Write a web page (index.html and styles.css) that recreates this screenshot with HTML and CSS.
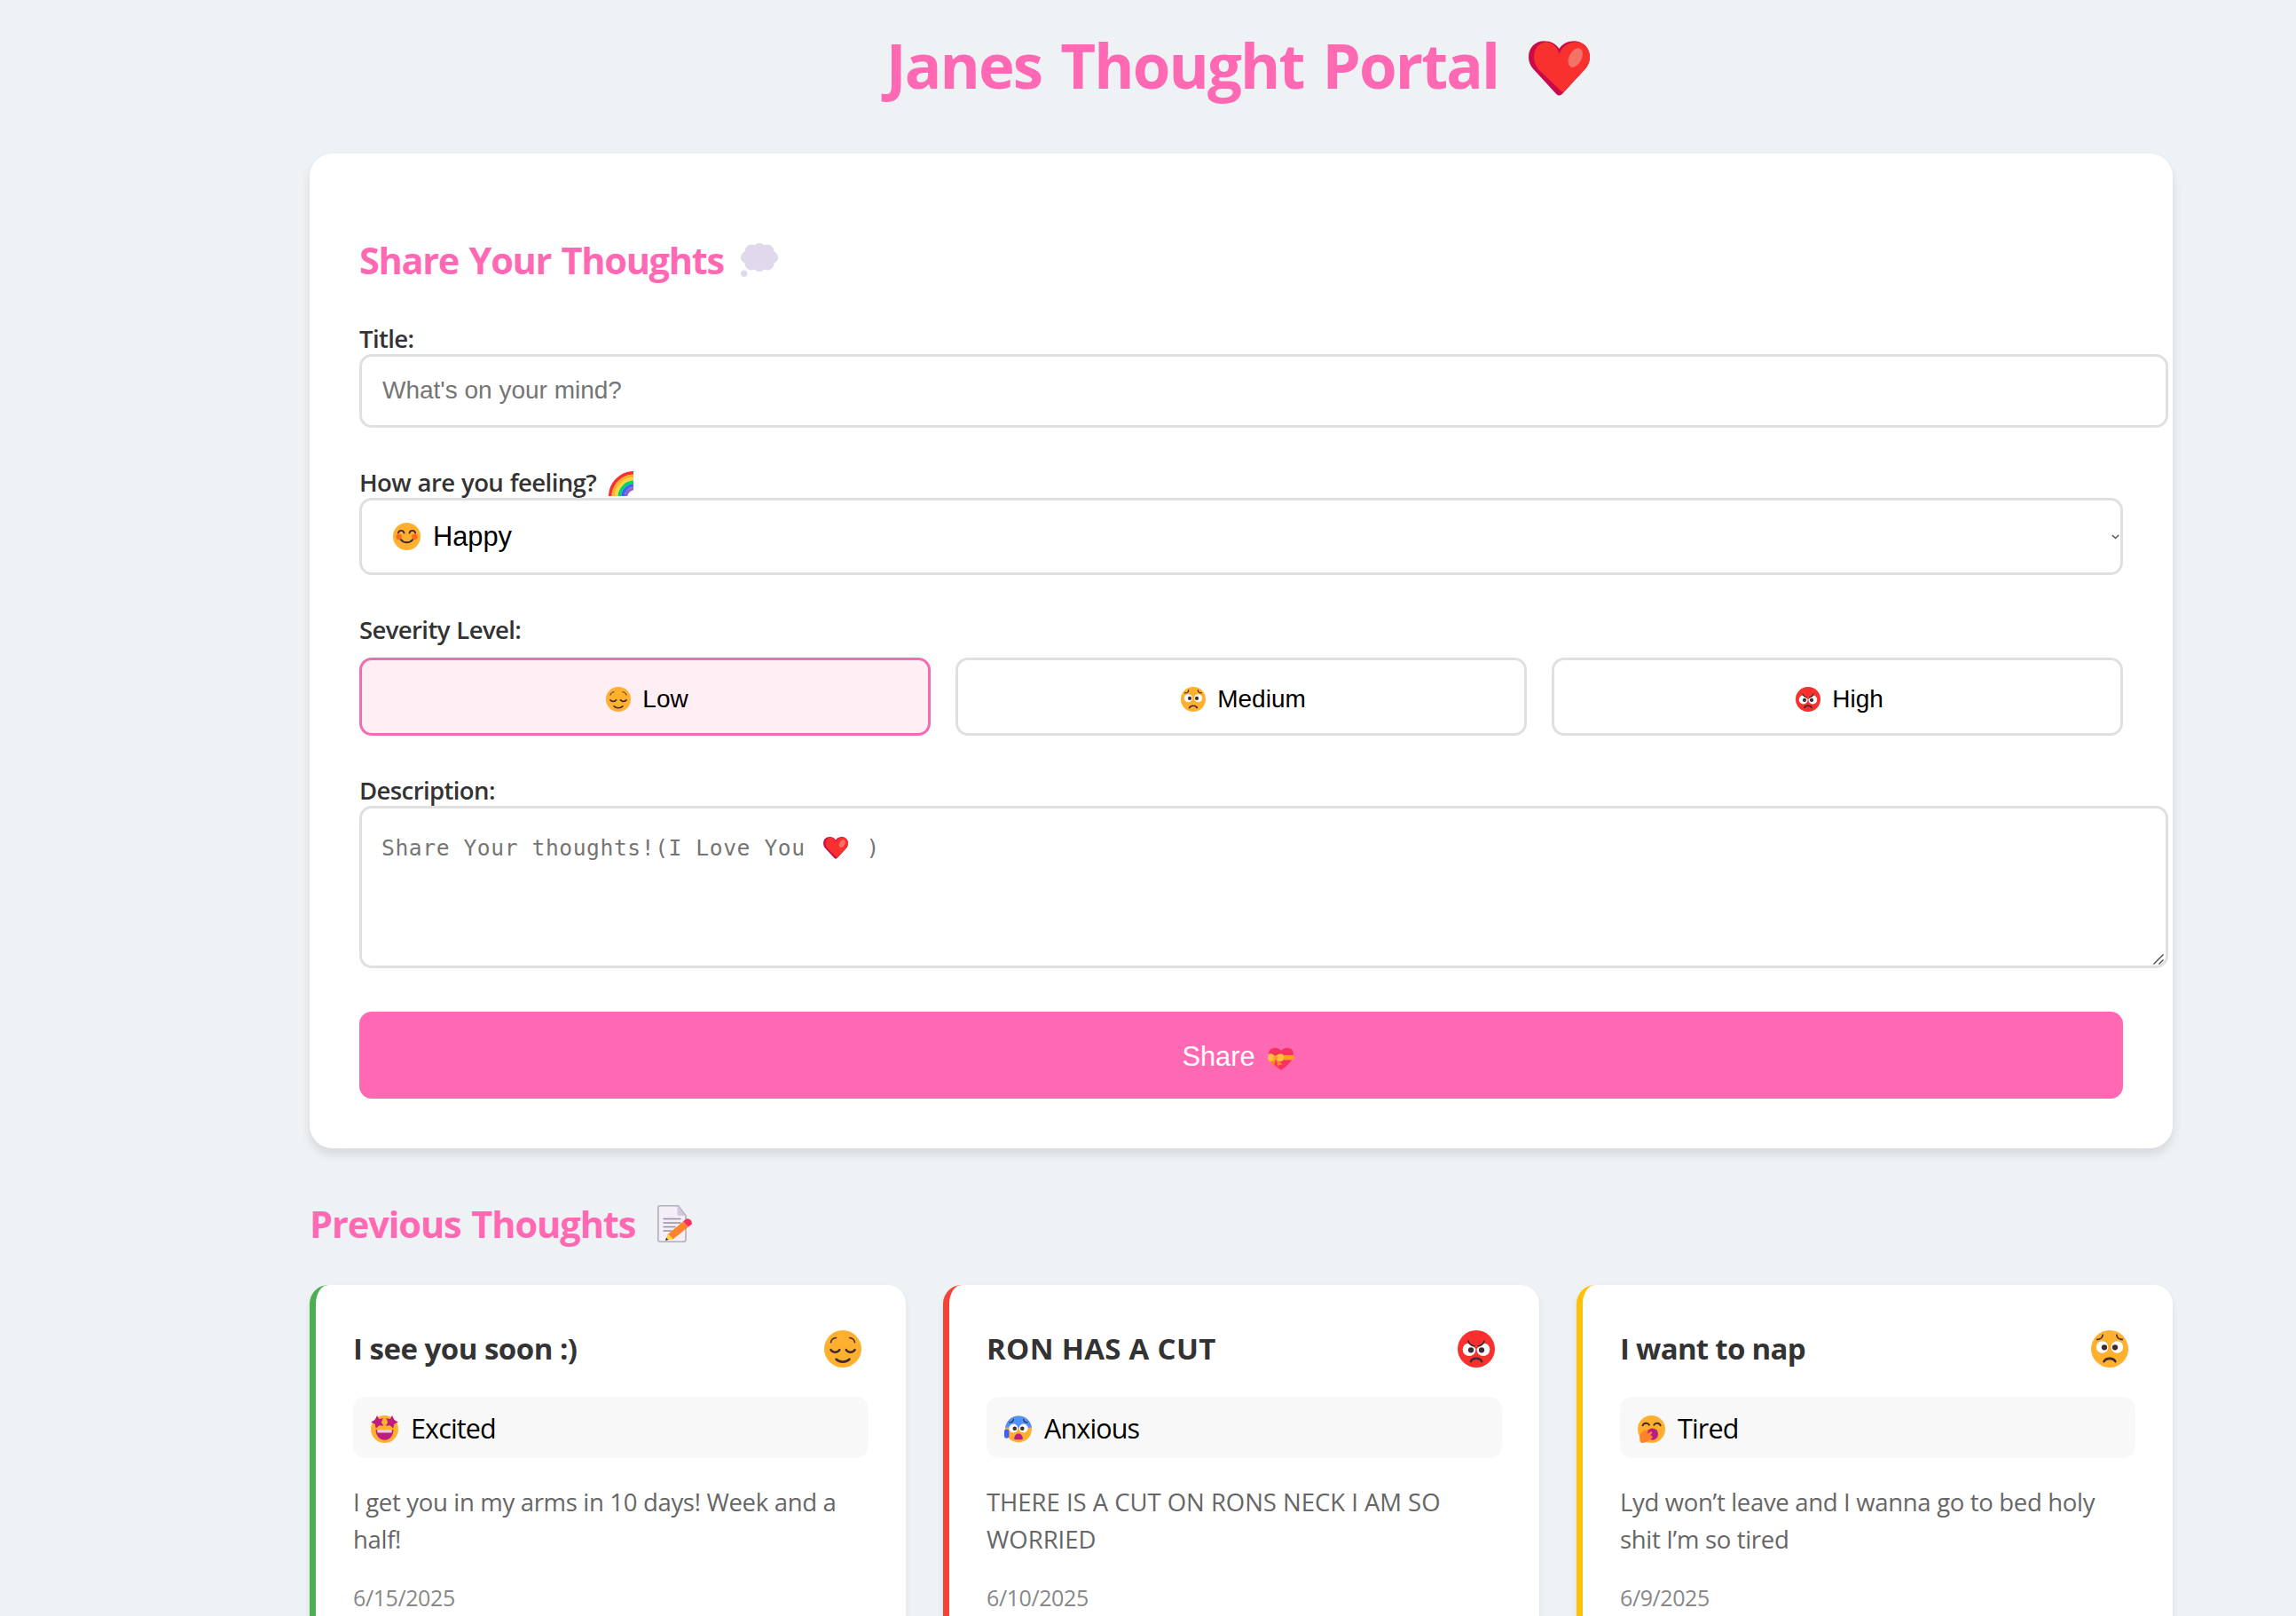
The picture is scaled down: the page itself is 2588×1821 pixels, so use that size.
FILE: index.html
```html
<!DOCTYPE html>
<html lang="en">
<head>
<meta charset="utf-8">
<title>Janes Thought Portal</title>
<link rel="stylesheet" href="styles.css">
</head>
<body>
<svg class="defs" aria-hidden="true">
  <symbol id="heart" viewBox="0 0 69 62">
    <path fill="#ca0b4a" d="M34.500 9C31 3.500 25 .3 17.500.3 7.500.3 0 8 0 18c0 5.500 1.800 10 5.500 14L31 59.700c2.400 2.400 4.600 2.400 7 0L63.500 32C67.200 28 69 23.500 69 18 69 8 61.500.3 51.500.3 44 .3 38 3.500 34.500 9z"/>
    <path fill="#f8312f" d="M34.500 15.500C33 8 28 2.500 20 1.200 11.500 2 6 9 6 18c0 6 2.500 11.500 7 16l25.800 24.800L63.500 32C67.200 28 69 23.500 69 18 69 8.500 62.500 1.500 53.500 1.200 44 1.500 37 7 34.500 15.500z"/>
    <ellipse cx="52.700" cy="19" rx="7" ry="11.500" transform="rotate(28 52.700 19)" fill="#f37366"/>
  </symbol>
  <symbol id="cloud" viewBox="0 0 42 38">
    <g fill="#e0d8ec"><circle cx="12" cy="9" r="7.500"/><circle cx="21" cy="7.500" r="7.500"/><circle cx="30" cy="9" r="7.500"/><circle cx="7" cy="16" r="7"/><circle cx="35" cy="16" r="7"/><circle cx="12" cy="23" r="7.500"/><circle cx="21" cy="24.500" r="7.500"/><circle cx="30" cy="23" r="7.500"/><circle cx="21" cy="16" r="10"/><circle cx="3.800" cy="34.300" r="3.700"/></g>
  </symbol>
  <symbol id="rainbow" viewBox="0 0 28 28">
    <g fill="none" stroke-width="3.700"><path stroke="#f8312f" d="M1.800 28C1.800 15 13 2 28 1.800"/><path stroke="#ffb02e" d="M5.300 28C5.300 17 15 5.500 28 5.300"/><path stroke="#fcd53f" d="M8.800 28C8.800 19 17 9 28 8.800"/><path stroke="#00d26a" d="M12.400 28C12.400 21 19 12.600 28 12.400"/><path stroke="#3f5fff" d="M16 28C16 23 21 16.200 28 16"/><path stroke="#8d65c5" d="M19.500 28C19.500 24 24 19.700 28 19.500"/></g>
  </symbol>
  <symbol id="happy" viewBox="2 2 28 28">
    <circle cx="16" cy="16" r="14" fill="#ffb02e"/><circle cx="8" cy="16.500" r="2.900" fill="#ff6723"/><circle cx="24" cy="16.500" r="2.900" fill="#ff6723"/>
    <g class="line"><path d="M7.300 12.500c.8-3.300 5.200-3.300 6 0M18.700 12.500c.8-3.300 5.200-3.300 6 0M10 19.300c2.800 3.700 9.200 3.700 12 0"/></g>
  </symbol>
  <symbol id="relieved" viewBox="2 2 28 28">
    <circle cx="16" cy="16" r="14" fill="#ffb02e"/>
    <g class="line"><path stroke-width="1" d="M7 11.200c.3-2 1.800-3.300 4-3.500M25 11.200c-.3-2-1.800-3.300-4-3.500"/><path d="M7 16.800c1.300 2.200 5.200 2.200 6.500 0M18.500 16.800c1.300 2.200 5.200 2.200 6.500 0M11 23.800c2.300 2.600 7.700 2.600 10 0"/></g>
  </symbol>
  <symbol id="worried" viewBox="2 2 28 28">
    <circle cx="16" cy="16" r="14" fill="#ffb02e"/><circle cx="10.400" cy="14.700" r="4.500" fill="#fff"/><circle cx="21.600" cy="14.700" r="4.500" fill="#fff"/><circle cx="12" cy="14.900" r="2.100" fill="#402a32"/><circle cx="20" cy="14.900" r="2.100" fill="#402a32"/>
    <g class="line"><path stroke-width="1.100" d="M6.500 8.900c2.100.1 4-1.300 4.300-3.300M25.500 8.900c-2.100.1-4-1.300-4.300-3.300"/><path d="M11.700 25.500c1.500-3 7.100-3 8.600 0"/></g>
  </symbol>
  <symbol id="angry" viewBox="2 2 28 28">
    <circle cx="16" cy="16" r="14" fill="#f8312f"/><circle cx="10.700" cy="16.500" r="4.900" fill="#fff"/><circle cx="21.300" cy="16.500" r="4.900" fill="#fff"/><path fill="#f8312f" d="M8 10l8 6 8-6-8-1z"/><circle cx="12" cy="16.900" r="2.100" fill="#402a32"/><circle cx="20" cy="16.900" r="2.100" fill="#402a32"/>
    <g class="line"><path stroke-width="1.100" d="M10 10c.6 2.300 2 3.500 4.500 3.800M22 10c-.6 2.300-2 3.500-4.500 3.800"/><path d="M11.900 25.400c1.500-3 6.700-3 8.200 0"/></g>
  </symbol>
  <symbol id="starstruck" viewBox="2 2 28 28">
    <circle cx="16" cy="16" r="14" fill="#ffb02e"/><path fill="#bb1d80" d="M7 16.500h18c0 6-3.500 10.500-9 10.500S7 22.500 7 16.500z"/><path fill="#f3c4dc" d="M8.500 16.500h15v2c0 .8-.5 1.200-1.200 1.200H9.700c-.7 0-1.200-.4-1.200-1.200z"/>
    <path fill="#bb1d80" d="M8.300 2l2 3.500 4.200-.6-1.800 4 2.200 3.800-4.400-.5-3.300 3-1-4.400-4-2 4-2.200zM23.700 2l-2 3.500-4.200-.6 1.800 4-2.200 3.800 4.400-.5 3.300 3 1-4.400 4-2-4-2.200z"/>
  </symbol>
  <symbol id="anxious" viewBox="1 2 29 28">
    <circle cx="16" cy="16" r="14" fill="#ffb02e"/><path fill="#5092ff" d="M2.100 14.300a14 14 0 0 1 27.800 0z"/><circle cx="10.700" cy="15" r="4.600" fill="#fff"/><circle cx="21.300" cy="15" r="4.600" fill="#fff"/><circle cx="12" cy="15.200" r="2.100" fill="#402a32"/><circle cx="20" cy="15.200" r="2.100" fill="#402a32"/><path fill="#bb1d80" d="M11.500 26c0-7 9-7 9 0 0 .8-.5 1-1 1h-7c-.6 0-1-.2-1-1z"/><rect x="1" y="16" width="5" height="9.500" rx="2.500" fill="#3f5fff"/>
    <g class="line"><path stroke-width="1.100" d="M6.500 8.900c2.100.1 4-1.300 4.300-3.300M25.500 8.900c-2.100.1-4-1.300-4.300-3.300"/></g>
  </symbol>
  <symbol id="yawn" viewBox="2 2 28 28">
    <circle cx="16" cy="16" r="14" fill="#ffb02e"/><ellipse cx="17" cy="21" rx="5.800" ry="6" fill="#bb1d80"/><path fill="#ff822d" d="M12 17c-2-1-8 2-8 6 0 3 0 7 2.500 7 3 0 5-1.500 7.500-3 2-1.300 3.500-2 3-3.500-.4-1-1.500-1-2.500-.6 1-1.500 2.800-3.200 2-4.200-1-1-3 .8-5 2.300.5-1.500 1.800-3.400.5-4z"/>
    <g class="line"><path d="M7 12.300c1-2.900 5.500-3.200 6.700-.6M18.500 11.700c1.200-2.600 5.700-2.300 6.700.6"/></g>
  </symbol>
  <symbol id="gift" viewBox="0 0 30 26">
    <path fill="#f8315f" d="M15 4C12-1 1-1 1 8c0 7 7 13 14 18 7-5 14-11 14-18C29-1 18-1 15 4z"/><path fill="#ff9d2a" d="M14 9h15.700v5.500H14z"/><path fill="#ff822d" d="M6 14l-4 6 3-.5L6.500 22 9 15zM10 15l1 7 2.500-2.500 3 .5-4-6z"/><path fill="#fcc13f" d="M1 8c3-2 5 0 7.500 2.500C11 8 14 6.500 17 8c1.500 2 1 5 0 7.500-3 1-6 0-8.500-2C6 16 3 17 1 15.500 0 13 0 10 1 8z"/><circle cx="8.800" cy="12" r="2.600" fill="#ff9d2a"/>
  </symbol>
  <symbol id="memo" viewBox="0 0 39 42">
    <path fill="#f3eef8" stroke="#b4acbc" stroke-width="1.600" d="M3 .8h20.500L32 12v27c0 1.300-.8 2.200-2.200 2.200H3C1.600 41.200.8 40.300.8 39V3C.8 1.600 1.600.8 3 .8z"/><path fill="#d3cbdc" d="M22.500 1.500 31.500 12h-7c-1.300 0-2-.8-2-2z"/><path fill="none" stroke="#998ea4" stroke-width="1.300" d="M6.500 15.500h20M6.500 20h20M6.500 24.500h14M6.500 29h10"/>
    <path fill="#ff822d" d="M29 18.500l6 6-17.500 14-6.500-5z"/><path fill="#f92f60" d="M29 18.500l3-2.700c2.500-2 7.500 1 6.800 5.500L35 24.500z"/><path fill="#fcd53f" d="M12 32l5.800 6.200L9 40z"/><path fill="#402a32" d="M10 36.500l2.300 2.400L9 40z"/>
  </symbol>
</svg>

<main class="container">
  <h1 class="page-title"><span>Janes Thought Portal</span><svg><use href="#heart"/></svg></h1>

  <section class="form-card">
    <h2 class="section-title"><span>Share Your Thoughts</span><svg class="i-cloud"><use href="#cloud"/></svg></h2>
    <div class="field"><div class="label">Title:</div><div class="control input">What's on your mind?</div></div>
    <div class="field"><div class="label">How are you feeling?<svg class="i-rainbow"><use href="#rainbow"/></svg></div>
      <div class="control select"><svg class="i30"><use href="#happy"/></svg>Happy<svg class="chevron" viewBox="0 0 9 6"><path d="M.8 1l3.700 3.500L8.200 1"/></svg></div></div>
    <div class="field"><div class="label label-spaced">Severity Level:</div>
      <div class="levels"><button class="level active"><svg><use href="#relieved"/></svg>Low</button><button class="level"><svg><use href="#worried"/></svg>Medium</button><button class="level"><svg><use href="#angry"/></svg>High</button></div></div>
    <div class="field last"><div class="label">Description:</div>
      <div class="control textarea"><span>Share Your thoughts!(I Love You</span><svg class="i-heart"><use href="#heart"/></svg><span>)</span><svg class="grip" viewBox="0 0 12 12"><path d="M.5 11.500l11-11M6.500 11.500l5-5"/></svg></div></div>
    <button class="share">Share<svg><use href="#gift"/></svg></button>
  </section>

  <h2 class="section-title previous"><span>Previous Thoughts</span><svg class="i-memo"><use href="#memo"/></svg></h2>
  <section class="thoughts">
    <article class="thought low">
      <header><h3>I see you soon :)</h3><svg><use href="#relieved"/></svg></header>
      <div class="mood"><svg><use href="#starstruck"/></svg>Excited</div>
      <p>I get you in my arms in 10 days! Week and a half!</p>
      <time>6/15/2025</time>
    </article>
    <article class="thought high">
      <header><h3>RON HAS A CUT</h3><svg><use href="#angry"/></svg></header>
      <div class="mood"><svg><use href="#anxious"/></svg>Anxious</div>
      <p>THERE IS A CUT ON RONS NECK I AM SO WORRIED</p>
      <time>6/10/2025</time>
    </article>
    <article class="thought medium">
      <header><h3>I want to nap</h3><svg><use href="#worried"/></svg></header>
      <div class="mood"><svg><use href="#yawn"/></svg>Tired</div>
      <p>Lyd won’t leave and I wanna go to bed holy shit I’m so tired</p>
      <time>6/9/2025</time>
    </article>
  </section>
</main>
</body>
</html>
```
FILE: styles.css
```css
* { box-sizing: border-box; }
html { background: #eef2f5; }
body { margin: 0; height: 1821px; overflow: hidden; background: #eef2f5; font-family: "Open Sans", "Noto Sans", sans-serif; color: #333; }
svg { display: block; flex: none; }
.defs { position: absolute; width: 0; height: 0; }
.line { fill: none; stroke: #402a32; stroke-width: 1.700; stroke-linecap: round; }
h1, h2, h3, p { margin: 0; }
button { font: inherit; border: 0; padding: 0; }

.container { width: 2100px; margin-left: 349px; padding-top: 28px; }
.page-title { display: flex; align-items: center; justify-content: center; height: 90px; margin-bottom: 55px; padding-right: 7px; gap: 34px; font-size: 69px; line-height: 90px; letter-spacing: -1.900px; word-spacing: 5px; color: #ff69b4; }
.page-title svg { width: 69px; height: 62px; margin-top: 8px; }

.form-card { padding: 56px; background: #fff; border-radius: 26px; box-shadow: 0 7px 11px rgba(0, 0, 0, .1); }
.section-title { display: flex; align-items: center; height: 56px; margin: 36px 0 41px; font-size: 41.500px; line-height: 56px; letter-spacing: -1.300px; word-spacing: 2px; color: #ff69b4; }
.i-cloud { width: 42px; height: 38px; margin-left: 19px; }
.i-memo { width: 39px; height: 42px; margin-left: 25px; }
.previous { margin: 57px 0 41px; letter-spacing: -1.080px; }

.field { margin-bottom: 42px; }
.last { margin-bottom: 49px; }
.label { display: flex; height: 37px; line-height: 39px; font-size: 27.500px; font-weight: 600; letter-spacing: -.6px; word-spacing: 1px; }
.label-spaced { margin-bottom: 14px; }
.i-rainbow { width: 28px; height: 28px; margin: 7px 0 0 14px; }
.control { position: relative; display: flex; align-items: center; border: 3px solid #e0e0e0; border-radius: 14px; background: #fff; }
.input { width: 2039px; height: 83px; padding: 0 0 2px 23px; font: 28px "Liberation Sans", Arial, sans-serif; color: #757575; }
.select { height: 87px; padding-left: 35px; font: 30.800px "Liberation Sans", Arial, sans-serif; color: #000; }
.i30 { width: 31px; height: 31px; margin-right: 14px; }
.chevron { width: 9px; height: 6px; margin: 0 1px 0 auto; fill: none; stroke: #555; stroke-width: 1.500; }
.levels { display: grid; grid-template-columns: repeat(3, 1fr); gap: 28px; }
.level { display: flex; align-items: center; justify-content: center; gap: 13px; height: 88px; padding: 5px 0 0 5px; border: 3px solid #e0e0e0; border-radius: 14px; background: #fff; font: 28px "Liberation Sans", Arial, sans-serif; color: #000; }
.level svg { width: 28px; height: 28px; }
.active { border-color: #f06db2; background: #ffeef4; }
.textarea { width: 2039px; height: 183px; padding: 23px 0 0 22px; align-items: flex-start; font: 24.600px/44px "DejaVu Sans Mono", monospace; letter-spacing: .6px; color: #757575; }
.i-heart { width: 28px; height: 25px; margin: 9px 21px 0 20px; }
.grip { position: absolute; right: 2px; bottom: 1px; width: 12px; height: 12px; stroke: #444; stroke-width: 1.300; }
.share { display: flex; align-items: center; justify-content: center; gap: 14px; width: 100%; height: 98px; padding: 3px 7px 0 0; border-radius: 14px; background: #ff69b4; color: #fff; font: 30.800px "Liberation Sans", Arial, sans-serif; }
.share svg { width: 30px; height: 26px; margin-top: 4px; }

.thoughts { display: grid; grid-template-columns: repeat(3, 672px); gap: 42px; }
.thought { padding: 42px; border-left: 7px solid; border-radius: 21px; background: #fff; box-shadow: 0 4px 7px rgba(0, 0, 0, .08); }
.low { border-left-color: #4caf50; }
.high { border-left-color: #f44336; }
.medium { border-left-color: #ffc107; }
.thought header { display: flex; align-items: center; justify-content: space-between; height: 60px; margin-bottom: 24px; padding-right: 8px; }
.thought header svg { width: 42px; height: 42px; }
h3 { font-size: 33px; line-height: 60px; letter-spacing: -.5px; }
.high h3 { letter-spacing: .3px; }
.medium h3 { letter-spacing: -.7px; }
.mood { display: flex; align-items: center; height: 69px; padding-left: 20px; border-radius: 14px; background: #f8f8f8; font-size: 30.500px; letter-spacing: -.85px; color: #000; }
.mood svg { width: 31px; height: 31px; margin: 3px 14px 0 0; }
.thought p { margin: 29px 0 27px; font-size: 27.500px; line-height: 42px; letter-spacing: -.32px; color: #666; }
.high p { letter-spacing: -.03px; }
time { display: inline-block; font-size: 25px; line-height: 34px; letter-spacing: -.4px; color: #888; }
```
